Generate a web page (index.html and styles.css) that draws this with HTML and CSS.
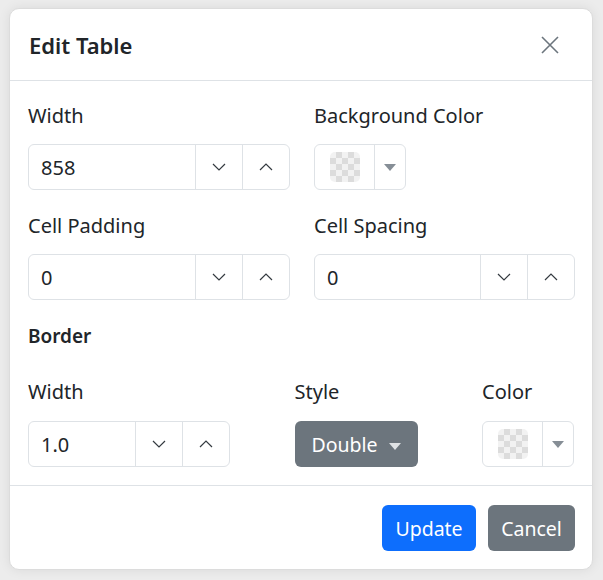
FILE: index.html
```html
<!doctype html>
<html lang="en">
<head>
    <meta charset="UTF-8">
    <title>Edit Table</title>
    <link rel="stylesheet" href="styles.css">
</head>
<body>
<div class="modal">
    <div class="modal-header">
        <div class="modal-title">Edit Table</div>
        <div class="btn-close">
            <svg width="20" height="20" viewBox="0 0 20 20"><path d="M2 2 L18 18 M18 2 L2 18" stroke="#6c757d" stroke-width="1.6" fill="none"/></svg>
        </div>
    </div>
    <div class="modal-body">
        <div class="row">
            <div class="group">
                <div class="label">Width</div>
                <div class="spin">
                    <div class="spin-value">858</div>
                    <div class="spin-btn"><svg width="14" height="8" viewBox="0 0 14 8"><path d="M1 1 L7 7 L13 1" stroke="#343a40" stroke-width="1.2" fill="none"/></svg></div>
                    <div class="spin-btn"><svg width="14" height="8" viewBox="0 0 14 8"><path d="M1 7 L7 1 L13 7" stroke="#343a40" stroke-width="1.2" fill="none"/></svg></div>
                </div>
            </div>
            <div class="group">
                <div class="label">Background Color</div>
                <div class="picker">
                    <div class="swatch"></div>
                    <div class="picker-caret"><span class="caret"></span></div>
                </div>
            </div>
        </div>
        <div class="row">
            <div class="group">
                <div class="label">Cell Padding</div>
                <div class="spin">
                    <div class="spin-value">0</div>
                    <div class="spin-btn"><svg width="14" height="8" viewBox="0 0 14 8"><path d="M1 1 L7 7 L13 1" stroke="#343a40" stroke-width="1.2" fill="none"/></svg></div>
                    <div class="spin-btn"><svg width="14" height="8" viewBox="0 0 14 8"><path d="M1 7 L7 1 L13 7" stroke="#343a40" stroke-width="1.2" fill="none"/></svg></div>
                </div>
            </div>
            <div class="group">
                <div class="label">Cell Spacing</div>
                <div class="spin">
                    <div class="spin-value">0</div>
                    <div class="spin-btn"><svg width="14" height="8" viewBox="0 0 14 8"><path d="M1 1 L7 7 L13 1" stroke="#343a40" stroke-width="1.2" fill="none"/></svg></div>
                    <div class="spin-btn"><svg width="14" height="8" viewBox="0 0 14 8"><path d="M1 7 L7 1 L13 7" stroke="#343a40" stroke-width="1.2" fill="none"/></svg></div>
                </div>
            </div>
        </div>
        <div class="section">Border</div>
        <div class="border-row">
            <div class="group">
                <div class="label">Width</div>
                <div class="spin spin-small">
                    <div class="spin-value">1.0</div>
                    <div class="spin-btn"><svg width="14" height="8" viewBox="0 0 14 8"><path d="M1 1 L7 7 L13 1" stroke="#343a40" stroke-width="1.2" fill="none"/></svg></div>
                    <div class="spin-btn"><svg width="14" height="8" viewBox="0 0 14 8"><path d="M1 7 L7 1 L13 7" stroke="#343a40" stroke-width="1.2" fill="none"/></svg></div>
                </div>
            </div>
            <div class="group">
                <div class="label">Style</div>
                <div class="btn btn-secondary btn-style">Double <span class="caret caret-light"></span></div>
            </div>
            <div class="group">
                <div class="label">Color</div>
                <div class="picker">
                    <div class="swatch"></div>
                    <div class="picker-caret"><span class="caret"></span></div>
                </div>
            </div>
        </div>
    </div>
    <div class="modal-footer">
        <div class="btn btn-primary">Update</div>
        <div class="btn btn-secondary">Cancel</div>
    </div>
</div>
</body>
</html>
```

FILE: styles.css
```css
html,body{
    margin:0px;
    padding:0px;
}
body{
    background:#ececec;
    font-family:"Noto Sans","Open Sans",sans-serif;
    color:#212529;
    padding:8px 10px 10px 9px;
}
.modal{
    width:584px;
    height:562px;
    background:#fff;
    border:1px solid #dcdcdc;
    border-radius:10px;
    box-sizing:border-box;
    box-shadow:0 0 12px rgba(0,0,0,.08);
}
.modal-header{
    height:71px;
    border-bottom:1px solid #dee2e6;
    display:flex;
    align-items:center;
    justify-content:space-between;
    padding:0 32px 0 19px;
}
.modal-title{
    font-size:22px;
    font-weight:600;
}
.btn-close{
    width:20px;
    height:20px;
}
.modal-body{
    padding:20px 18px 18px 18px;
    border-bottom:1px solid #dee2e6;
}
.row{
    display:grid;
    grid-template-columns:262px 261px;
    gap:24px;
    margin-bottom:21px;
}
.label{
    font-size:20px;
    line-height:30px;
    margin-bottom:13px;
}
.spin{
    display:flex;
    height:46px;
    border:1px solid #dee2e6;
    border-radius:6px;
    box-sizing:border-box;
}
.spin-value{
    flex:1;
    font-size:20px;
    line-height:46px;
    padding-left:12px;
}
.spin-btn{
    width:46px;
    border-left:1px solid #dee2e6;
    display:flex;
    align-items:center;
    justify-content:center;
}
.spin-small{
    width:202px;
}
.picker{
    display:flex;
    width:92px;
    height:46px;
    border:1px solid #dee2e6;
    border-radius:6px;
    box-sizing:border-box;
}
.swatch{
    width:30px;
    height:30px;
    margin:7px 14px 0 15px;
    border-radius:5px;
    background-color:#f2f2f2;
    background-image:
        linear-gradient(45deg,#dcdcdc 25%,transparent 25%,transparent 75%,#dcdcdc 75%),
        linear-gradient(45deg,#dcdcdc 25%,transparent 25%,transparent 75%,#dcdcdc 75%);
    background-size:12px 12px;
    background-position:0 0,6px 6px;
}
.picker-caret{
    flex:1;
    border-left:1px solid #dee2e6;
    display:flex;
    align-items:center;
    justify-content:center;
}
.caret{
    display:inline-block;
    width:0;
    height:0;
    border-left:6px solid transparent;
    border-right:6px solid transparent;
    border-top:7px solid #868e96;
}
.caret-light{
    border-top-color:#dfe2e5;
    margin-left:6px;
    vertical-align:middle;
}
.section{
    font-size:19px;
    font-weight:600;
    line-height:30px;
    margin-bottom:26px;
}
.border-row{
    display:flex;
    justify-content:space-between;
}
.border-row .label{
    margin-bottom:14px;
}
.btn{
    height:46px;
    line-height:48px;
    border-radius:6px;
    font-size:19.5px;
    color:#fff;
    box-sizing:border-box;
    text-align:center;
}
.btn-primary{
    background:#0d6efd;
    width:94px;
}
.btn-secondary{
    background:#6c757d;
    width:87px;
}
.btn-style{
    width:123px;
}
.modal-footer{
    display:flex;
    justify-content:flex-end;
    gap:12px;
    padding:19px 17px 0 0;
}
```
